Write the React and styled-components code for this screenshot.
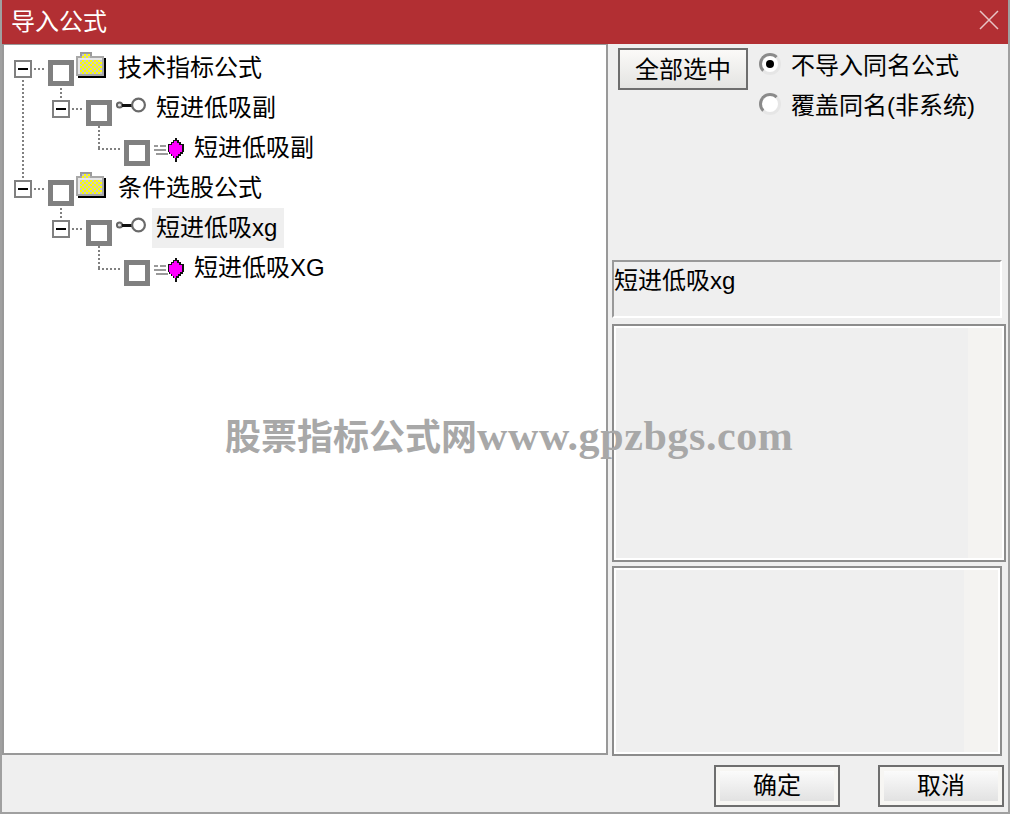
import React from 'react'
import styled, { createGlobalStyle } from 'styled-components'

const GlobalStyle = createGlobalStyle`
    html, body {
        margin: 0;
        padding: 0;
        background: #efefef;
    }
    * {
        box-sizing: border-box;
    }
`

const Window = styled.div`
    position: relative;
    width: 1010px;
    height: 814px;
    display: flex;
    flex-direction: column;
    background: #efefef;
    border: solid #a0a0a0;
    border-width: 0 2px 2px 2px;
    font-family: "Liberation Sans", "Noto Sans CJK SC", sans-serif;
    font-size: 24px;
    color: #000;
    overflow: hidden;
`
const TitleBar = styled.div`
    height: 44px;
    margin: 0 -2px;
    padding: 0 11px 5px 11px;
    flex-shrink: 0;
    display: flex;
    align-items: center;
    justify-content: space-between;
    background: #b22f33;
    color: #fff;
`
const Body = styled.div`
    flex: 1;
    display: flex;
    min-height: 0;
`
const TreePanel = styled.div`
    width: 606px;
    height: 711px;
    flex-shrink: 0;
    padding-top: 2px;
    background: #fff;
    border: 2px solid #999;
    border-top-width: 1px;
`
const Row = styled.div`
    height: 40px;
    display: flex;
    align-items: flex-start;
    padding-left: ${(p) => 10 + p.$level * 38}px;
`
const ExpanderSlot = styled.div`
    position: relative;
    width: 34px;
    height: 18px;
    margin-top: 13px;
    flex-shrink: 0;
`
const Expander = styled.div`
    position: relative;
    width: 18px;
    height: 18px;
    border: 2px solid #808080;
    background: #fff;
    &::before {
        content: '';
        position: absolute;
        left: 2px;
        right: 2px;
        top: 6px;
        height: 2px;
        background: #000;
    }
`
const Dots = styled.span`
    position: absolute;
    background-image: ${(p) =>
        p.$vertical
            ? 'repeating-linear-gradient(to bottom, #808080 0 2px, transparent 2px 4px)'
            : 'repeating-linear-gradient(to right, #808080 0 2px, transparent 2px 4px)'};
    ${(p) => (p.$vertical ? 'width: 2px;' : 'height: 2px;')}
    left: ${(p) => p.$x}px;
    top: ${(p) => p.$y}px;
    ${(p) => (p.$vertical ? `height: ${p.$len}px;` : `width: ${p.$len}px;`)}
`
const CheckBox = styled.div`
    width: 26px;
    height: 26px;
    margin-top: 13px;
    flex-shrink: 0;
    border: 5px solid #808080;
    background: #fff;
`
const IconSlot = styled.div`
    position: relative;
    width: 44px;
    height: 40px;
    flex-shrink: 0;
    svg {
        position: absolute;
        left: ${(p) => p.$x}px;
        top: ${(p) => p.$y}px;
    }
`
const TreeLabel = styled.div`
    height: 40px;
    margin-top: 1px;
    margin-left: -4px;
    padding: 0 4px;
    width: ${(p) => (p.$selected ? '132px' : 'auto')};
    line-height: 39px;
    white-space: nowrap;
    background: ${(p) => (p.$selected ? '#efefef' : 'transparent')};
`
const SidePanel = styled.div`
    flex: 1;
    display: flex;
    flex-direction: column;
    min-width: 0;
`
const OptionArea = styled.div`
    height: 216px;
    display: flex;
    align-items: flex-start;
    padding: 4px 0 0 10px;
`
const PushButton = styled.div`
    flex-shrink: 0;
    width: ${(p) => p.$w}px;
    height: 42px;
    display: flex;
    align-items: center;
    justify-content: center;
    border: 2px solid #6e6e6e;
    background: ${(p) =>
        p.$inset
            ? 'linear-gradient(#fbfbfb, #e2e2e2) content-box, #f7f6f3'
            : 'linear-gradient(#fbfaf8, #e4e4e2)'};
    padding: ${(p) => (p.$inset ? '4px' : '1px 0 0')};
    line-height: ${(p) => (p.$inset ? '26px' : '34px')};
`
const RadioGroup = styled.div`
    display: flex;
    flex-direction: column;
    margin-left: 11px;
    margin-top: -3px;
`
const RadioRow = styled.div`
    height: 40px;
    padding-bottom: 4px;
    display: flex;
    align-items: center;
    gap: 10px;
    white-space: nowrap;
`
const Radio = styled.span`
    position: relative;
    width: 22px;
    height: 22px;
    margin-top: 2px;
    border-radius: 50%;
    background: #fff;
    border: 3px solid;
    border-color: #8a8a8a #e6e6e6 #e6e6e6 #8a8a8a;
    &::after {
        content: '';
        display: ${(p) => (p.$checked ? 'block' : 'none')};
        position: absolute;
        left: 5px;
        top: 5px;
        width: 6px;
        height: 6px;
        border-radius: 50%;
        background: #000;
        box-shadow: 0 0 0 1px #000;
    }
`
const NameBox = styled.div`
    width: 390px;
    height: 58px;
    margin-left: 4px;
    padding-top: 2px;
    line-height: 34px;
    background: #efefef;
    border: 2px solid;
    border-color: #999 #fff #fff #999;
`
const MemoBox = styled.div`
    width: ${(p) => p.$w}px;
    height: ${(p) => p.$h}px;
    margin-left: 4px;
    margin-top: ${(p) => p.$top}px;
    border: 2px solid #8c8c8c;
    box-shadow: inset 0 0 0 2px #fff;
    padding: 2px;
    display: flex;
`
const MemoText = styled.div`
    flex: 1;
    background: #efefef;
`
const MemoTrack = styled.div`
    width: 34px;
    background: #f4f3f1;
`
const Footer = styled.div`
    flex: 1;
    display: flex;
    justify-content: flex-end;
    align-items: flex-start;
    gap: 38px;
    padding: 9px 4px 0 0;
`
const Watermark = styled.div`
    position: absolute;
    left: 223px;
    top: 410px;
    height: 52px;
    line-height: 52px;
    white-space: nowrap;
    pointer-events: none;
    color: #a8a8a8;
    font-family: "Liberation Serif", "Noto Sans CJK SC", serif;
    font-weight: 700;
    font-size: 36px;
`
const WatermarkUrl = styled.span`
    font-size: 42px;
    letter-spacing: 0.6px;
`

const CloseIcon = () => (
    <svg width="20" height="20" viewBox="0 0 20 20">
        <path d="M1 1 L19 19 M19 1 L1 19" stroke="#e8c4c5" strokeWidth="1.5" fill="none" />
    </svg>
)

const FolderIcon = () => (
    <svg width="32" height="26" viewBox="0 0 32 26" shapeRendering="crispEdges">
        <defs>
            <pattern id="folderCheck" width="4" height="4" patternUnits="userSpaceOnUse">
                <rect width="4" height="4" fill="#ffff00" />
                <rect width="2" height="2" fill="#c8c8c8" />
                <rect x="2" y="2" width="2" height="2" fill="#c8c8c8" />
            </pattern>
        </defs>
        <rect x="4" y="0" width="12" height="6" fill="#9a9a9a" />
        <rect x="0" y="4" width="28" height="20" fill="#a8a8a8" />
        <rect x="6" y="2" width="8" height="4" fill="url(#folderCheck)" />
        <rect x="2" y="6" width="24" height="16" fill="#e8e8e8" />
        <rect x="4" y="8" width="22" height="14" fill="url(#folderCheck)" />
        <rect x="28" y="6" width="2" height="20" fill="#000" />
        <rect x="2" y="24" width="28" height="2" fill="#000" />
    </svg>
)

const KeyIcon = () => (
    <svg width="30" height="16" viewBox="0 0 30 16">
        <circle cx="3.5" cy="8" r="2.6" fill="#e0e0e0" stroke="#666" strokeWidth="2" />
        <rect x="6" y="7" width="11" height="3" fill="#111" />
        <circle cx="22.5" cy="8" r="6.4" fill="#fff" stroke="#6a6a6a" strokeWidth="2.2" />
    </svg>
)

const FormulaIcon = () => (
    <svg width="32" height="24" viewBox="0 0 32 24" shapeRendering="crispEdges">
        <path d="M0 8 h4 M6 8 h6 M0 12 h12 M2 16 h12" stroke="#9a9a9a" strokeWidth="2" fill="none" />
        <path
            d="M21 0 h2 v2 h2 v2 h2 v2 h3 v8 h-1 v2 h-2 v2 h-2 v2 h-2 v4 h-2 v-4 h-2 v-2 h-2 v-2 h-2 v-2 h-1 v-8 h3 v-2 h2 v-2 h2 z"
            fill="#111"
        />
        <path
            d="M21 3 h2 v2 h2 v2 h3 v7 h-2 v2 h-2 v2 h-2 v2 h-2 v-2 h-2 v-2 h-2 v-2 h-1 v-7 h3 v-2 h2 v-2 z"
            fill="#ff00ff"
        />
    </svg>
)

const rows = [
    { level: 0, kind: 'folder', text: '技术指标公式', trail: true },
    { level: 1, kind: 'key', text: '短进低吸副', up: true },
    { level: 2, kind: 'leaf', text: '短进低吸副', elbow: true },
    { level: 0, kind: 'folder', text: '条件选股公式' },
    { level: 1, kind: 'key', text: '短进低吸xg', up: true, selected: true },
    { level: 2, kind: 'leaf', text: '短进低吸XG', elbow: true },
]

const icons = {
    folder: { Icon: FolderIcon, x: 2, y: 5 },
    key: { Icon: KeyIcon, x: 4, y: 10 },
    leaf: { Icon: FormulaIcon, x: 4, y: 11 },
}

const TreeRow = ({ level, kind, text, trail, up, elbow, selected }) => {
    const { Icon, x, y } = icons[kind]
    return (
        <Row $level={level}>
            <ExpanderSlot>
                {kind !== 'leaf' && <Expander />}
                {kind !== 'leaf' && <Dots $x={20} $y={8} $len={12} />}
                {trail && <Dots $vertical $x={8} $y={20} $len={100} />}
                {up && <Dots $vertical $x={8} $y={-12} $len={10} />}
                {elbow && <Dots $vertical $x={8} $y={-14} $len={22} />}
                {elbow && <Dots $x={8} $y={8} $len={22} />}
            </ExpanderSlot>
            <CheckBox />
            <IconSlot $x={x} $y={y}>
                <Icon />
            </IconSlot>
            <TreeLabel $selected={selected}>{text}</TreeLabel>
        </Row>
    )
}

export default function App() {
    return (
        <>
            <GlobalStyle />
            <Window>
                <TitleBar>
                    导入公式
                    <CloseIcon />
                </TitleBar>
                <Body>
                    <TreePanel>
                        {rows.map((row, i) => (
                            <TreeRow key={i} {...row} />
                        ))}
                    </TreePanel>
                    <SidePanel>
                        <OptionArea>
                            <PushButton $w={130}>全部选中</PushButton>
                            <RadioGroup>
                                <RadioRow>
                                    <Radio $checked />
                                    不导入同名公式
                                </RadioRow>
                                <RadioRow>
                                    <Radio />
                                    覆盖同名(非系统)
                                </RadioRow>
                            </RadioGroup>
                        </OptionArea>
                        <NameBox>短进低吸xg</NameBox>
                        <MemoBox $w={394} $h={238} $top={6}>
                            <MemoText />
                            <MemoTrack />
                        </MemoBox>
                        <MemoBox $w={390} $h={190} $top={4}>
                            <MemoText />
                            <MemoTrack />
                        </MemoBox>
                        <Footer>
                            <PushButton $w={126} $inset>确定</PushButton>
                            <PushButton $w={126} $inset>取消</PushButton>
                        </Footer>
                    </SidePanel>
                </Body>
                <Watermark>
                    股票指标公式网<WatermarkUrl>www.gpzbgs.com</WatermarkUrl>
                </Watermark>
            </Window>
        </>
    )
}
